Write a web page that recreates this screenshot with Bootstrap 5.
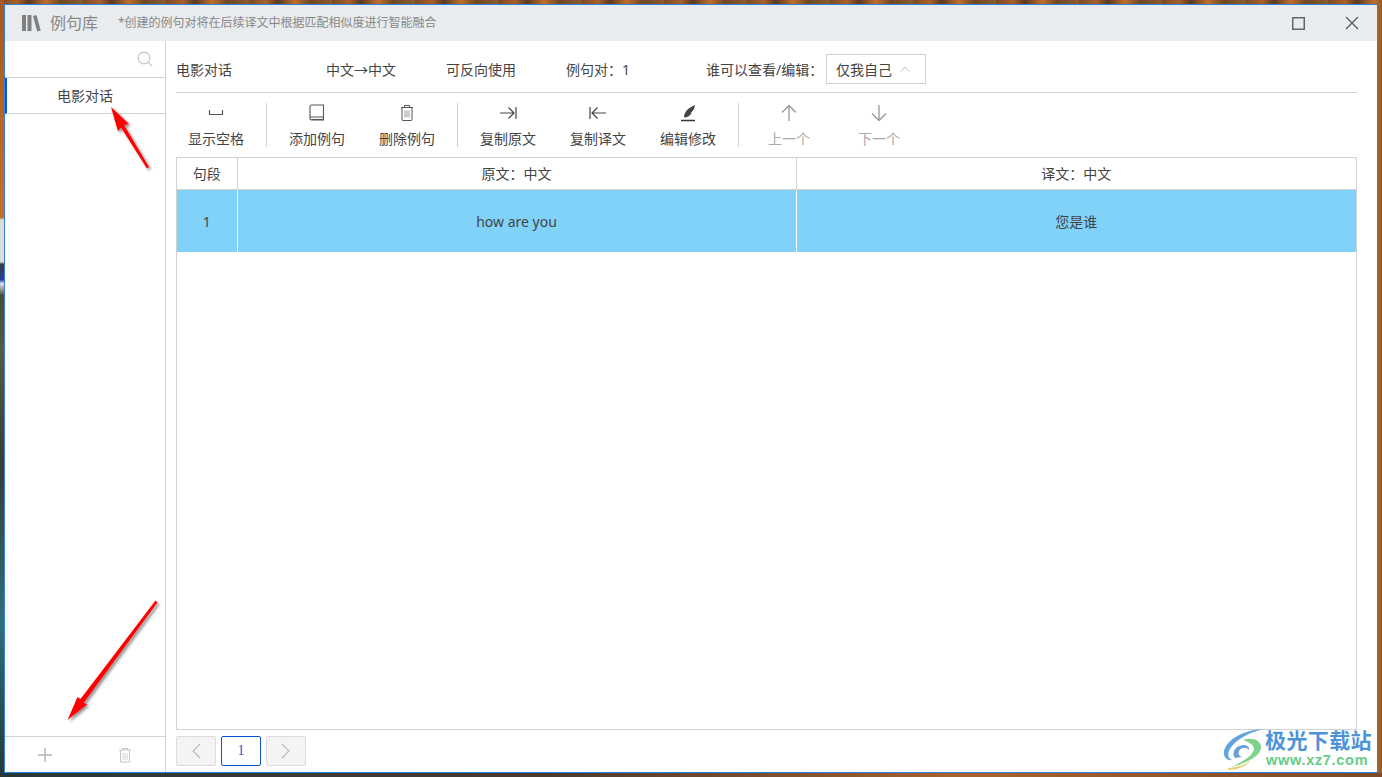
<!DOCTYPE html>
<html lang="zh">
<head>
<meta charset="utf-8">
<title>例句库</title>
<link rel="stylesheet" href="https://cdn.jsdelivr.net/npm/bootstrap@5.3.0/dist/css/bootstrap.min.css">
<style>
html,body{height:777px;overflow:hidden}
body{font-family:"Noto Sans","Noto Sans CJK SC",sans-serif;font-size:14px;color:#444;padding:4px;position:relative;
background:repeating-linear-gradient(90deg,#7a4a26 0,#a9602a 17px,#5a3a24 29px,#c06e2c 46px,#6e4826 61px,#8c5a30 83px)}
.desk-left{position:absolute;left:0;top:0;width:4px;height:777px;background:linear-gradient(180deg,#a8571f 0,#c8702a 28%,#dcdcdc 28.3%,#dcdcdc 33.7%,#3a3a40 34%,#2a3fa0 36%,#e0e0f0 36.500%,#4a4a38 38%,#5a5a40 45%,#3a3a38 60%,#2f6f78 80%,#26383a 100%)}
.desk-bottom{position:absolute;left:0;right:0;bottom:0;height:4px;background:linear-gradient(90deg,#26383a,#4b3a30 40%,#a9622f 70%,#7a4a2a)}
.win{height:769px;width:1374px;border:1px solid #2f80d8;background:#fff;position:relative;z-index:1}
.ttl{height:36px;background:#e8ecef;color:#888;padding-left:16px;flex:none}
.ttl-name{font-size:16px;margin-left:9px;width:68px}
.ttl-note{font-size:12px;color:#888}
.winbtn{width:50px;height:36px;display:flex;align-items:center;justify-content:center}
.side{width:161px;border-right:1px solid #d2d2d2;flex:none}
.side-search{height:37px;border-bottom:1px solid #d2d2d2;padding-right:12px}
.side-item{height:36px;border-bottom:1px solid #d2d2d2;border-left:2px solid #0a56d0;color:#444;line-height:35px;text-align:center;padding-right:2px}
.side-foot{height:36px;border-top:1px solid #d2d2d2;flex:none}
.side-foot>div{width:80px;text-align:center;line-height:1}
.mainp{padding:13px 20px 6px 10px;min-width:0}
.info{height:39px;border-bottom:1px solid #d2d2d2;padding-bottom:8px;flex:none}
.w150{width:150px}.w120{width:120px}.w140{width:140px}
.picker{width:100px;height:30px;border:1px solid #d2d2d2;padding-left:9px;gap:8px}
.tools{height:64px;padding-top:10px;padding-bottom:10px;gap:10px;flex:none}
.tool{width:80px;height:44px;text-align:center;line-height:1}
.tool svg{display:block;margin:0 auto;height:20px}
.tool span{display:block;margin-top:6px;line-height:20px;white-space:nowrap}
.tool.off{color:#aaa}
.tsep{width:1px;height:44px;background:#d2d2d2}
.gridbox{border:1px solid #d2d2d2;height:573px;flex:none}
.gridt{table-layout:fixed;width:100%;margin:0;--bs-table-border-color:#d2d2d2;color:#444}
.gridt th{font-weight:400;height:31px;padding:0;text-align:center;vertical-align:middle;border-bottom:1px solid #d2d2d2;color:#444}
.gridt td{height:63px;padding:2px 0 0;text-align:center;vertical-align:middle;background:#81d2f9;color:#444;border:0;border-right:1px solid #fff}
.gridt th{border-right:1px solid #d2d2d2}
.gridt th:last-child,.gridt td:last-child{border-right:0}
.pager{gap:5px;margin-top:6px;flex:none}
.pg{width:40px;height:30px;border:1px solid #dcdcdc;border-radius:2px;background:#f4f4f4;display:flex;align-items:center;justify-content:center}
.pg.on{background:#fff;border-color:#0a56d0;font:14px "Liberation Serif",serif;color:#2a5ad0}
.arrows{position:absolute;left:0;top:0;width:1382px;height:777px;z-index:2;pointer-events:none}
.wm-logo{position:absolute;left:1222px;top:727px;z-index:3}
.wm-text{position:absolute;left:1265px;top:725px;z-index:3;font-family:"Noto Sans CJK SC",sans-serif;font-size:21px;font-weight:700;color:#4d93d8;line-height:28px;letter-spacing:.4px;white-space:nowrap}
.wm-url{position:absolute;left:1266px;top:751px;z-index:3;font:700 14.5px/18px "Liberation Sans",sans-serif;color:#66cc88;letter-spacing:.7px;white-space:nowrap}
</style>
</head>
<body>
<div class="desk-left"></div><div class="desk-bottom"></div>
<div class="win d-flex flex-column">
  <div class="ttl d-flex align-items-center">
    <svg width="20" height="18" viewBox="0 0 20 18"><g fill="#808080"><rect x="1" y="1" width="4" height="16"/><rect x="6.500" y="1" width="4" height="16"/><path d="M12 2l3.500-1 4.200 15.500-3.500 1z"/></g></svg>
    <div class="ttl-name">例句库</div>
    <div class="ttl-note">*创建的例句对将在后续译文中根据匹配相似度进行智能融合</div>
    <div class="ms-auto d-flex gap-0">
      <div class="winbtn me-0"><svg width="13" height="13" viewBox="0 0 13 13"><rect x=".75" y=".75" width="11.500" height="11.500" fill="none" stroke="#666" stroke-width="1.500"/></svg></div>
      <div class="winbtn ms-1"><svg width="14" height="14" viewBox="0 0 14 14"><path d="M1 1l12 12M13 1L1 13" stroke="#555" stroke-width="1.200"/></svg></div>
    </div>
  </div>
  <div class="d-flex flex-grow-1" style="min-height:0">
    <div class="side d-flex flex-column">
      <div class="side-search d-flex align-items-center justify-content-end">
        <svg width="16" height="16" viewBox="0 0 16 16" fill="none" stroke="#c4c4c4" stroke-width="1.200"><circle cx="7" cy="7" r="5.800"/><path d="M11.200 11.200l3.800 3.800"/></svg>
      </div>
      <div class="side-item">电影对话</div>
      <div class="flex-grow-1"></div>
      <div class="side-foot d-flex align-items-center">
        <div><svg width="16" height="16" viewBox="0 0 16 16"><path d="M8 1v14M1 8h14" stroke="#b4b4b4" stroke-width="1.400"/></svg></div>
        <div><svg width="14" height="16" viewBox="0 0 14 16" fill="none" stroke="#c4c4c4"><path d="M1 3h12M4.500 3V1.500h5V3M2.500 3v12h9V3"/><path d="M5 6v7M7 6v7M9 6v7" stroke="#d4d4d4"/></svg></div>
      </div>
    </div>
    <div class="mainp flex-grow-1 d-flex flex-column">
      <div class="info d-flex align-items-center">
        <div class="w150">电影对话</div>
        <div class="w120">中文→中文</div>
        <div class="w120">可反向使用</div>
        <div class="w140">例句对：1</div>
        <div class="w120">谁可以查看/编辑：</div>
        <div class="picker d-flex align-items-center">仅我自己
          <svg width="10" height="6" viewBox="0 0 10 6" fill="none" stroke="#bbb"><path d="M.5 5.500L5 1l4.500 4.500"/></svg>
        </div>
      </div>
      <div class="tools d-flex">
        <div class="tool"><svg width="20" height="20" viewBox="0 0 20 20" fill="none" stroke="#555" stroke-width="1.200"><path d="M3.500 7v4.500h13V7" /></svg><span>显示空格</span></div>
        <div class="tsep"></div>
        <div class="tool"><svg width="20" height="20" viewBox="0 0 20 20" fill="none" stroke="#555" stroke-width="1.100"><path d="M3 15.500V3.500q0-1.500 1.500-1.500h12v12h-12q-1.500 0-1.500 1.500t1.500 1.500h12v-3"/><path d="M4.500 16.500h12"/></svg><span>添加例句</span></div>
        <div class="tool"><svg width="20" height="20" viewBox="0 0 20 20" fill="none" stroke="#555" stroke-width="1"><path d="M4 4.500h12M7.500 4.500V2.500h5v2M5 4.500v12q0 1 1 1h8q1 0 1-1v-12"/><path d="M8 7.500v7M10 7.500v7M12 7.500v7" stroke="#999"/></svg><span>删除例句</span></div>
        <div class="tsep"></div>
        <div class="tool"><svg width="20" height="20" viewBox="0 0 20 20" fill="none" stroke="#444" stroke-width="1.200"><path d="M2 10h14M10.500 4.500l5.500 5.500-5.500 5.500M18 4v12"/></svg><span>复制原文</span></div>
        <div class="tool"><svg width="20" height="20" viewBox="0 0 20 20" fill="none" stroke="#444" stroke-width="1.200"><path d="M18 10H4M9.500 4.500L4 10l5.500 5.500M2 4v12"/></svg><span>复制译文</span></div>
        <div class="tool"><svg width="20" height="20" viewBox="0 0 20 20"><path d="M3 17.500h14" stroke="#333" stroke-width="1.500"/><path d="M6 14.500C6 9 10 5 17 2c-.5 4-2 6-4 7.500l.5.5C12 13 9 14.500 6 14.500z" fill="#444"/></svg><span>编辑修改</span></div>
        <div class="tsep"></div>
        <div class="tool off"><svg width="20" height="20" viewBox="0 0 20 20" fill="none" stroke="#999" stroke-width="1.300"><path d="M10 18V2.500M3 9.500l7-7 7 7"/></svg><span>上一个</span></div>
        <div class="tool off"><svg width="20" height="20" viewBox="0 0 20 20" fill="none" stroke="#999" stroke-width="1.300"><path d="M10 2v15.500M3 10.500l7 7 7-7"/></svg><span>下一个</span></div>
      </div>
      <div class="gridbox">
        <table class="table gridt">
          <colgroup><col style="width:60px"><col style="width:559px"><col></colgroup>
          <thead><tr><th>句段</th><th>原文：中文</th><th>译文：中文</th></tr></thead>
          <tbody><tr><td>1</td><td>how are you</td><td>您是谁</td></tr></tbody>
        </table>
      </div>
      <div class="pager d-flex">
        <div class="pg"><svg width="10" height="16" viewBox="0 0 10 16" fill="none" stroke="#bbb" stroke-width="1.200"><path d="M9 1L2 8l7 7"/></svg></div>
        <div class="pg on">1</div>
        <div class="pg"><svg width="10" height="16" viewBox="0 0 10 16" fill="none" stroke="#bbb" stroke-width="1.200"><path d="M1 1l7 7-7 7"/></svg></div>
      </div>
    </div>
  </div>
</div>
<svg class="arrows" viewBox="0 0 1382 777">
  <defs><filter id="sh" x="-30%" y="-30%" width="160%" height="160%"><feDropShadow dx="2" dy="2" stdDeviation="1.500" flood-color="#000" flood-opacity=".45"/></filter></defs>
  <g filter="url(#sh)" fill="#f00">
    <path d="M111 107l18 17-5 1 25 42-2 1.500-26-41-3 4z"/>
    <path d="M155.500 600.500l2 2-74 100.500 4 1-20 16 10-23 3 2z"/>
  </g>
</svg>
<svg class="wm-logo" width="44" height="46" viewBox="0 0 44 46" fill="none">
  <path d="M41 2C22 3 5 12 2 24c-1 6 3 10 8 9-4-2-5-6-2-11C13 13 26 6 41 2z" fill="#62a4e0"/>
  <path d="M13 31c-4-5 0-12 8-13 4 0 7 2 6 5-2-3-8-3-10 1-1 3 0 5 3 6z" fill="#6a9fd6"/>
  <path d="M21 13c9-3 17 0 18 6 1 9-12 16-29 21 11-6 21-11 22-18 0-4-5-7-11-9z" fill="#7ed28a"/>
  <path d="M6 41c8 0 16-3 23-7-5 5-14 9-23 9z" fill="#e6d070"/>
</svg>
<div class="wm-text">极光下载站</div>
<div class="wm-url">www.xz7.com</div>
<script src="https://cdn.jsdelivr.net/npm/bootstrap@5.3.0/dist/js/bootstrap.bundle.min.js"></script>
</body>
</html>
